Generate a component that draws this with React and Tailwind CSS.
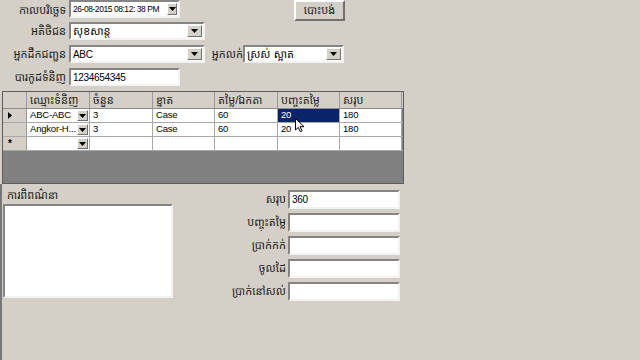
import React from 'react'

const font = { fontFamily: '"Liberation Sans", "Noto Sans Khmer", "Khmer OS", "DejaVu Sans", sans-serif' }

function DropBtn({ small, narrow }) {
  return (
    <div
      className={
        'flex items-center justify-center bg-[#d4d0c8] border border-t-white border-l-white border-r-[#6f6f6f] border-b-[#6f6f6f] ' +
        (small ? 'w-[11px] h-[11px]' : narrow ? 'w-[10px] h-full' : 'w-[15px] h-full')
      }
    >
      <svg width="7" height="4" viewBox="0 0 7 4">
        <path d="M0 0h7L3.5 4z" fill="#000" />
      </svg>
    </div>
  )
}

function Box({ w, h = 18, children, drop, small, narrow, textCls }) {
  return (
    <div
      className="flex items-stretch bg-white border-2 border-t-[#858585] border-l-[#858585] border-r-[#f2f2f2] border-b-[#f2f2f2] shrink-0"
      style={{ width: w, height: h }}
    >
      <div
        className={
          'flex-1 flex items-center pl-[2px] text-black whitespace-nowrap overflow-hidden ' +
          (textCls ? textCls : small ? 'text-[10px] tracking-[-0.3px]' : 'text-[11px]')
        }
      >
        {children}
      </div>
      {drop && (
        <div className="p-[1px]">
          <DropBtn narrow={narrow} />
        </div>
      )}
    </div>
  )
}

function Label({ w = 66, children, className = '' }) {
  return (
    <div
      className={'text-right text-[11px] text-[#1a1a1a] whitespace-nowrap overflow-hidden shrink-0 ' + className}
      style={{ width: w }}
    >
      {children}
    </div>
  )
}

const cols = [
  { title: 'ឈ្មោះទំនិញ', w: 63 },
  { title: 'ចំនួន', w: 63 },
  { title: 'ខ្នាត', w: 62 },
  { title: 'តម្លៃ/ឯកតា', w: 63 },
  { title: 'បញ្ចុះតម្លៃ', w: 62 },
  { title: 'សរុប', w: 62 },
]

const rows = [
  ['ABC-ABC', '3', 'Case', '60', '20', '180'],
  ['Angkor-H...', '3', 'Case', '60', '20', '180'],
  ['', '', '', '', '', ''],
]

function Grid() {
  return (
    <div className="ml-[2px] mt-[5px] w-[402px] h-[93px] border border-[#5e5e5e] bg-[#808080] flex flex-col">
      <div className="flex h-[17px] bg-[#d4d0c8] border-b border-[#8a8a8a]">
        <div className="w-[24px] border-r border-[#9a9a9a]" />
        {cols.map((c) => (
          <div
            key={c.title}
            className="flex items-center pl-[3px] text-[11px] text-[#222] border-r border-[#9a9a9a] whitespace-nowrap overflow-hidden"
            style={{ width: c.w }}
          >
            {c.title}
          </div>
        ))}
      </div>
      {rows.map((r, i) => (
        <div key={i} className="flex h-[14px] border-b border-[#a8a8a8]">
          <div className="w-[24px] bg-[#d4d0c8] border-r border-[#9a9a9a] flex items-center pl-[5px] text-[10px] leading-none">
            {i === 0 && (
              <svg width="4" height="7" viewBox="0 0 4 7">
                <path d="M0 0l4 3.5L0 7z" fill="#000" />
              </svg>
            )}
            {i === 2 && <span className="font-bold">*</span>}
          </div>
          {r.map((v, j) => {
            const sel = i === 0 && j === 4
            return (
              <div
                key={j}
                className={
                  'flex items-center text-[9.5px] whitespace-nowrap overflow-hidden border-r border-[#a8a8a8] ' +
                  (sel ? 'bg-[#0a246a] text-white' : 'bg-white text-black')
                }
                style={{ width: cols[j].w }}
              >
                <span className="flex-1 pl-[3px] overflow-hidden tracking-[-0.2px]">{v}</span>
                {j === 0 && (
                  <div className="pr-[1px] shrink-0">
                    <DropBtn small />
                  </div>
                )}
              </div>
            )
          })}
        </div>
      ))}
    </div>
  )
}

const totals = [
  ['សរុប', '360'],
  ['បញ្ចុះតម្លៃ', ''],
  ['ប្រាក់កក់', ''],
  ['ចូលដៃ', ''],
  ['ប្រាក់នៅសល់', ''],
]

export default function App() {
  return (
    <div className="relative w-[640px] h-[360px] bg-[#d4d0c8] overflow-hidden" style={font}>
      <div className="flex items-start h-[18px]">
        <Label className="pt-[2px]">កាលបរិច្ឆេទ</Label>
        <div className="ml-[3px]">
          <Box w={111} drop narrow textCls="text-[8.5px] tracking-[-0.45px]">
            26-08-2015 08:12: 38 PM
          </Box>
        </div>
        <button className="ml-[114px] w-[51px] h-[21px] bg-[#d4d0c8] border-2 border-t-white border-l-white border-r-[#6f6f6f] border-b-[#6f6f6f] text-[11px] text-[#222] flex items-center justify-center">
          បោះបង់
        </button>
      </div>

      <div className="flex items-center h-[18px] mt-[4px]">
        <Label>អតិថិជន</Label>
        <div className="ml-[3px]">
          <Box w={136} drop>
            សុខសាន្ត
          </Box>
        </div>
      </div>

      <div className="flex items-center h-[18px] mt-[5px]">
        <Label>អ្នកដឹកជញ្ជូន</Label>
        <div className="ml-[3px]">
          <Box w={136} drop small>
            ABC
          </Box>
        </div>
        <Label w={36} className="ml-[2px]">អ្នកលក់</Label>
        <Box w={101} drop>
          ស្រស់ ស្អាត
        </Box>
      </div>

      <div className="flex items-center h-[18px] mt-[5px]">
        <Label>បារកូដទំនិញ</Label>
        <div className="ml-[3px]">
          <Box w={111} small>1234654345</Box>
        </div>
      </div>

      <Grid />

      <div className="flex h-[177px] border-l-2 border-[#777]">
        <div className="ml-[1px] w-[170px] flex flex-col">
          <div className="h-[20px] pt-[3px] pl-[4px] text-[11px] text-[#1a1a1a]">ការពិពណ៌នា</div>
          <div className="h-[94px] bg-white border-2 border-t-[#858585] border-l-[#858585] border-r-[#f2f2f2] border-b-[#f2f2f2]" />
        </div>
        <div className="ml-[54px] mt-[6px] flex flex-col gap-[4px]">
          {totals.map(([label, val]) => (
            <div key={label} className="flex items-center h-[19px]">
              <Label w={61} className="pr-[2px]">{label}</Label>
              <Box w={112} h={19} small>
                {val}
              </Box>
            </div>
          ))}
        </div>
      </div>

      <svg className="absolute left-[295px] top-[118px]" width="10" height="15" viewBox="0 0 10 15">
        <path d="M0.5 0.5v11.5l2.8-2.6 2 4.3 1.8-0.8-2-4.2h3.9z" fill="#fff" stroke="#000" strokeWidth="1" />
      </svg>
    </div>
  )
}
